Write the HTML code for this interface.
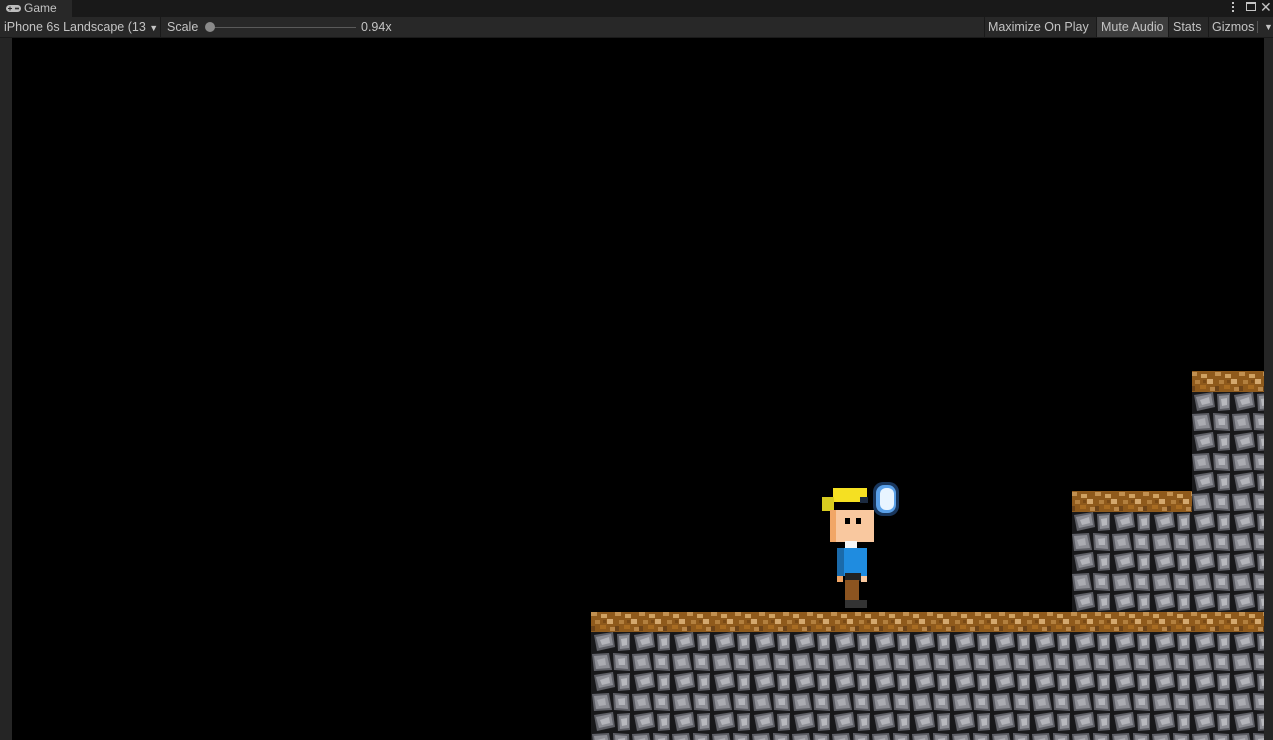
<!DOCTYPE html>
<html><head><meta charset="utf-8"><style>
*{margin:0;padding:0;box-sizing:border-box}
body{width:1273px;height:740px;background:#191919;overflow:hidden;position:relative;font-family:"Liberation Sans",sans-serif;font-size:12px;color:#c4c4c4}
.tabbar{position:absolute;left:0;top:0;width:1273px;height:17px;background:#191919}
.tab{position:absolute;left:0;top:0;width:72px;height:17px;background:#282828;color:#c4c4c4;padding-left:24px;line-height:17px}
.tb{position:absolute;left:0;top:17px;width:1273px;height:21px;background:#282828;border-bottom:1px solid #1a1a1a}
.item{position:absolute;top:0;height:20px;line-height:20px;padding:0 4px;white-space:nowrap}
.sep{position:absolute;top:0;width:1px;height:20px;background:#191919}
.game{position:absolute;left:12px;top:38px;width:1252px;height:702px;background:#000}
.lstrip{position:absolute;left:0;top:38px;width:12px;height:702px;background:#252525}
.rstrip{position:absolute;left:1264px;top:38px;width:9px;height:702px;background:#252525}
</style></head><body>
<div class="tabbar"></div>
<div class="tab">Game</div>
<svg style="position:absolute;left:6px;top:4px" width="15" height="9" viewBox="0 0 15 9"><rect x="0" y="1" width="15" height="7" rx="3.5" fill="#bdbdbd"/><rect x="2" y="4" width="4" height="1" fill="#282828"/><rect x="3.5" y="2.5" width="1" height="4" fill="#282828"/><circle cx="10" cy="4.5" r="1" fill="#282828"/><circle cx="12" cy="4.5" r="1" fill="#282828"/></svg>
<div style="position:absolute;left:1232px;top:2px;width:2px;height:10px;background:repeating-linear-gradient(#c4c4c4 0 2px,transparent 2px 4px)"></div>
<div style="position:absolute;left:1246px;top:2px;width:10px;height:9px;border:1px solid #c4c4c4;border-top-width:2px"></div>
<div style="position:absolute;left:1260px;top:-1px;font-size:14px;color:#c4c4c4">✕</div>
<div class="tb">
 <div class="item" style="left:0;font-size:12.5px">iPhone 6s Landscape (13 <span style="font-size:9px">▼</span></div>
 <div class="sep" style="left:160px"></div>
 <div class="item" style="left:163px;font-size:12.5px">Scale</div>
 <div style="position:absolute;left:210px;top:10px;width:146px;height:1px;background:#5a5a5a"></div>
 <div style="position:absolute;left:205px;top:5px;width:10px;height:10px;border-radius:50%;background:#8a8a8a"></div>
 <div class="item" style="left:357px;font-size:12.5px">0.94x</div>
 <div class="sep" style="left:984px"></div>
 <div class="item" style="left:984px;font-size:12.5px">Maximize On Play</div>
 <div class="item" style="left:1096px;width:72px;background:#3e3e3e;border-left:1px solid #191919;font-size:12.5px">Mute Audio</div>
 <div class="sep" style="left:1168px"></div>
 <div class="item" style="left:1169px;font-size:12.5px">Stats</div>
 <div class="sep" style="left:1208px"></div>
 <div class="item" style="left:1208px;font-size:12.5px">Gizmos</div>
 <div class="sep" style="left:1257px;top:4px;height:12px;background:#555"></div>
 <div class="item" style="left:1260px;font-size:9px">▼</div>
</div>
<div class="lstrip"></div><div class="rstrip"></div>
<div class="game"></div>
<svg style="position:absolute;left:0;top:0" width="1273" height="740">
<defs>
<pattern id="st" width="40" height="40" patternUnits="userSpaceOnUse" x="591" y="632">
<rect width="40" height="40" fill="#18181a"/>
<polygon points="3,3 22,0 24,15 6,19" fill="#5e5f66"/>
<polygon points="5,5 20,2 22,13 8,16" fill="#8d8e95"/>
<polygon points="9,8 18,5 19,11 11,13" fill="#b3b4ba"/>
<polygon points="26,2 39,1 39,18 27,19" fill="#5e5f66"/>
<polygon points="28,4 38,3 38,16 29,17" fill="#8d8e95"/>
<polygon points="30,7 36,6 36,13 31,14" fill="#b8b9be"/>
<polygon points="1,22 18,21 21,38 3,39" fill="#5e5f66"/>
<polygon points="3,24 16,23 19,36 5,37" fill="#8d8e95"/>
<polygon points="6,28 14,26 15,33 8,34" fill="#aaabb1"/>
<polygon points="22,21 38,22 39,39 23,38" fill="#5e5f66"/>
<polygon points="24,23 36,24 37,37 25,36" fill="#8d8e95"/>
<polygon points="27,27 34,26 34,33 28,33" fill="#b3b4ba"/>
</pattern>
<pattern id="dt" width="24" height="20" patternUnits="userSpaceOnUse" x="591" y="612">
<rect width="24" height="20" fill="#8f5a1c"/>
<rect x="0" y="0" width="6" height="4" fill="#c29050"/><rect x="10" y="2" width="6" height="4" fill="#d0a262"/>
<rect x="4" y="8" width="5" height="4" fill="#b3803f"/><rect x="16" y="7" width="6" height="5" fill="#d4a86e"/>
<rect x="9" y="13" width="6" height="4" fill="#a86c22"/><rect x="0" y="14" width="4" height="5" fill="#6e4418"/>
<rect x="19" y="15" width="5" height="4" fill="#b9874a"/><rect x="12" y="8" width="3" height="3" fill="#7a4a15"/>
</pattern>
</defs>
<rect x="591" y="612" width="673" height="128" fill="url(#st)"/>
<rect x="591" y="612" width="673" height="20" fill="url(#dt)"/>
<rect x="1072" y="491" width="120" height="121" fill="url(#st)"/>
<rect x="1072" y="491" width="120" height="21" fill="url(#dt)"/>
<rect x="1192" y="371" width="72" height="241" fill="url(#st)"/>
<rect x="1192" y="371" width="72" height="21" fill="url(#dt)"/>
<!-- character -->
<rect x="833" y="488" width="34" height="14" fill="#f5e022"/>
<rect x="822" y="497" width="12" height="14" fill="#d8cc20"/>
<rect x="860" y="497" width="8" height="6" fill="#1b2a40"/>
<rect x="873" y="482" width="26" height="34" rx="10" fill="#2a5a9a" opacity="0.6"/>
<rect x="876" y="485" width="20" height="28" rx="8" fill="#5aa0e8"/>
<rect x="880" y="488" width="14" height="22" rx="6" fill="#e8f4ff"/>
<rect x="830" y="510" width="44" height="32" fill="#f9c89f"/>
<rect x="830" y="510" width="6" height="32" fill="#f1a666"/>
<rect x="845" y="518" width="5" height="6" fill="#000"/><rect x="856" y="518" width="5" height="6" fill="#000"/>
<rect x="845" y="541" width="12" height="8" fill="#f7f7f7"/>
<rect x="837" y="548" width="30" height="28" fill="#1f8ce0"/>
<rect x="837" y="548" width="7" height="28" fill="#1a6aaa"/>
<rect x="845" y="573" width="16" height="8" fill="#222"/>
<rect x="837" y="576" width="6" height="6" fill="#f1a666"/><rect x="861" y="576" width="6" height="6" fill="#f9c89f"/>
<rect x="845" y="580" width="14" height="22" fill="#8c5420"/>
<rect x="845" y="600" width="22" height="8" fill="#333"/>
</svg>
</body></html>
